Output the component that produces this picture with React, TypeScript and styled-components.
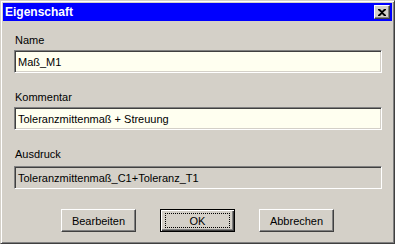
import styled, { createGlobalStyle } from "styled-components";

/////////////////////////////////////////////////////////////////////////////STYLE
const GlobalStyle = createGlobalStyle`
  html, body {
    margin: 0;
    padding: 0;
    background: #d4d0c8;
  }
  * {
    box-sizing: border-box;
  }
`;

const Window = styled.div`
  width: 395px;
  height: 244px;
  display: flex;
  flex-direction: column;
  padding: 2px;
  background: #d4d0c8;
  border: 1px solid;
  border-color: #d4d0c8 #404040 #404040 #d4d0c8;
  box-shadow: inset 1px 1px #ffffff, inset -1px -1px #808080;
  font-family: "Liberation Sans", Arial, sans-serif;
  font-size: 11px;
  color: #000000;
`;

const TitleBar = styled.div`
  height: 18px;
  display: flex;
  align-items: center;
  justify-content: space-between;
  padding: 0 2px 0 2px;
  background: #0000ff;
`;

const Title = styled.span`
  color: #ffffff;
  font-weight: bold;
  font-size: 12px;
`;

const CloseButton = styled.div`
  width: 16px;
  height: 14px;
  display: flex;
  align-items: center;
  justify-content: center;
  background: #d4d0c8;
  border: 1px solid;
  border-color: #ffffff #404040 #404040 #ffffff;
  box-shadow: inset -1px -1px #808080;
`;

const Body = styled.div`
  flex: 1;
  display: flex;
  flex-direction: column;
  padding: 13px 10px 0 11px;
`;

const Field = styled.div`
  display: flex;
  flex-direction: column;
  margin-bottom: 18px;
`;

const Label = styled.div<{ gap: number }>`
  height: 13px;
  line-height: 13px;
  padding-left: 1px;
  margin-bottom: ${({ gap }) => gap}px;
`;

const TextBox = styled.div<{ disabled?: boolean }>`
  height: 23px;
  display: flex;
  align-items: center;
  padding: 0 3px;
  background: ${({ disabled }) => (disabled ? "#d4d0c8" : "#fffff0")};
  border: 1px solid;
  border-color: #808080 #ffffff #ffffff #808080;
  box-shadow: inset 1px 1px #404040, inset -1px -1px #d4d0c8;
  white-space: nowrap;
`;

const ButtonRow = styled.div`
  display: flex;
  justify-content: center;
  gap: 24px;
  margin-top: 2px;
  padding-right: 1px;
`;

const Button = styled.div<{ isDefault?: boolean }>`
  width: 75px;
  height: 23px;
  display: flex;
  align-items: center;
  justify-content: center;
  background: #d4d0c8;
  border: 1px solid;
  border-color: ${({ isDefault }) =>
    isDefault ? "#000000" : "#ffffff #404040 #404040 #ffffff"};
  box-shadow: ${({ isDefault }) =>
    isDefault
      ? "inset 1px 1px #ffffff, inset -1px -1px #404040, inset -2px -2px #808080"
      : "inset -1px -1px #808080"};
`;

const FocusRect = styled.span`
  width: 65px;
  height: 15px;
  display: flex;
  align-items: center;
  justify-content: center;
  border: 1px dotted #000000;
`;

/////////////////////////////////////////////////////////////////////////////COMPONENT
function App() {
  //////////////////////////////////////////////////////////////RENDER
  return (
    <>
      <GlobalStyle />
      <Window>
        <TitleBar>
          <Title>Eigenschaft</Title>
          <CloseButton>
            <svg width="8" height="7" viewBox="0 0 8 7">
              <path
                d="M0 0h2l2 2 2-2h2v1L5 3.5 8 6v1H6L4 5 2 7H0V6l3-2.5L0 1z"
                fill="#000"
              />
            </svg>
          </CloseButton>
        </TitleBar>
        <Body>
          <Field>
            <Label gap={3}>Name</Label>
            <TextBox>Maß_M1</TextBox>
          </Field>
          <Field>
            <Label gap={3}>Kommentar</Label>
            <TextBox>Toleranzmittenmaß + Streuung</TextBox>
          </Field>
          <Field>
            <Label gap={5}>Ausdruck</Label>
            <TextBox disabled>Toleranzmittenmaß_C1+Toleranz_T1</TextBox>
          </Field>
          <ButtonRow>
            <Button>Bearbeiten</Button>
            <Button isDefault>
              <FocusRect>OK</FocusRect>
            </Button>
            <Button>Abbrechen</Button>
          </ButtonRow>
        </Body>
      </Window>
    </>
  );
}

export default App;
